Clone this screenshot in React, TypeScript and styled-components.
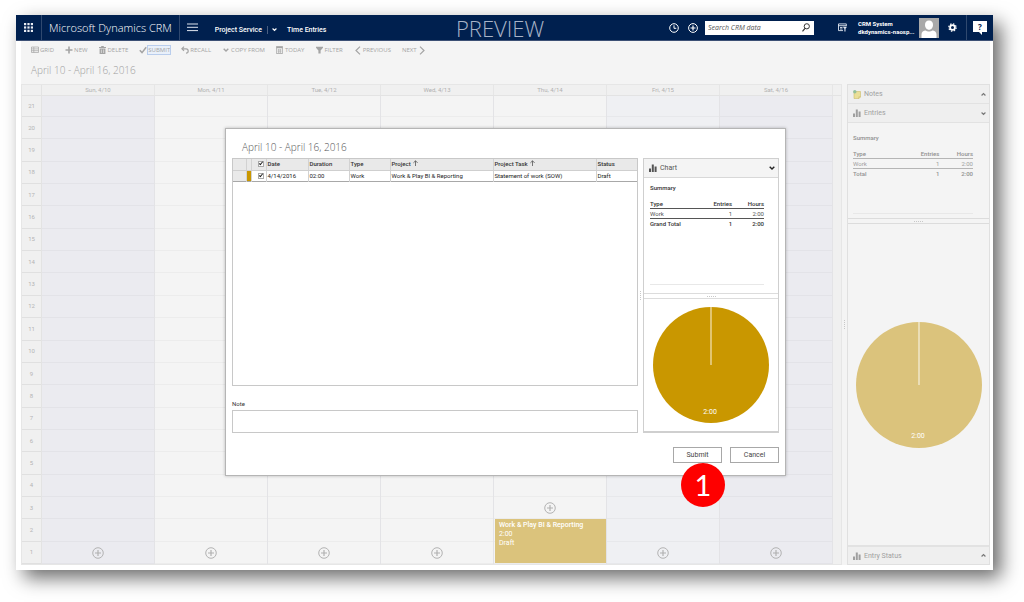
import React from "react";
import styled, { createGlobalStyle, css } from "styled-components";

const display = `"Open Sans", "Noto Sans", sans-serif`;

const GlobalStyle = createGlobalStyle`
  *, *::before, *::after { box-sizing: border-box; }
  body { margin: 0; background: #fff; color: #444; font: 6px/10px Roboto, "Open Sans", sans-serif; }
  button, input { font: inherit; color: inherit; margin: 0; padding: 0; }
  button { background: none; border: 0; cursor: pointer; }
  a { color: inherit; text-decoration: none; }
  svg { display: block; flex: none; }
`;

const Page = styled.div`
  display: flex;
  min-height: 100vh;
  padding: 15px 31px 32px 16px;
`;

const Window = styled.div`
  position: relative;
  flex: 1;
  min-width: 0;
  display: flex;
  flex-direction: column;
  background: #fff;
  box-shadow: 8px 8px 18px rgba(0, 0, 0, 0.58);
`;

/* Navigation bar */

const NavBar = styled.header`
  display: grid;
  grid-template-columns: 1fr auto 1fr;
  height: 26px;
  background: #00204f;
  color: #fff;
  border-bottom: 1px solid #3c5075;
`;

const NavGroup = styled.div<{ $end?: boolean }>`
  display: flex;
  align-items: center;
  justify-content: ${(p) => (p.$end ? "flex-end" : "flex-start")};
`;

const NavCell = styled.div<{ $pad: number; $divider?: boolean }>`
  display: flex;
  align-items: center;
  align-self: stretch;
  padding: 0 ${(p) => p.$pad}px;
  border-right: ${(p) => (p.$divider ? "1px solid #30496f" : "0")};
`;

const Brand = styled.a`
  font-family: ${display};
  font-size: 11px;
  font-weight: 300;
  line-height: 16px;
  white-space: nowrap;
`;

const Crumbs = styled.nav`
  display: flex;
  align-items: center;
  padding: 4px 0 0 10px;
  font-size: 7px;
  font-weight: 500;
  white-space: nowrap;
`;

const CrumbRule = styled.span`
  width: 1px;
  height: 8px;
  margin: 0 4px 0 5px;
  background: #4a5f82;
`;

const CrumbToggle = styled.button`
  margin-right: 10px;
`;

const Preview = styled.div`
  align-self: center;
  padding-right: 9px;
  color: #a9b4c8;
  font-family: ${display};
  font-size: 22px;
  font-weight: 300;
  line-height: 24px;
`;

const Search = styled.label`
  display: flex;
  align-items: center;
  width: 109px;
  height: 14px;
  margin: 0 24px 0 3px;
  padding: 0 4px 0 3px;
  background: #fff;
  color: #333;

  input {
    flex: 1;
    min-width: 0;
    border: 0;
    outline: 0;
    background: none;
    font-family: ${display};
    font-size: 7px;
    font-style: italic;
  }
  input::placeholder { color: #555; opacity: 1; }
`;

const Account = styled.div`
  width: 61px;
  margin-left: 11px;
  font-weight: 700;
  line-height: 8px;
  white-space: nowrap;
`;

/* Workspace behind the dialog */

const Workspace = styled.main`
  flex: 1;
  display: flex;
  flex-direction: column;
  margin: 0 3px 5px 5px;
  background: #f4f4f4;
  color: #b0b0b0;
`;

const CommandBar = styled.div`
  display: flex;
  align-items: center;
  gap: 11px;
  height: 18px;
  padding: 0 10px;
  color: #a4a4a4;
  font-family: ${display};
`;

const Command = styled.button<{ $focused?: boolean }>`
  display: flex;
  align-items: center;
  gap: 1px;
  white-space: nowrap;
  line-height: 8px;

  span {
    outline: ${(p) => (p.$focused ? "1px solid #b9cdec" : "0")};
    background: ${(p) => (p.$focused ? "#e9f0fa" : "none")};
  }
`;

const CommandIcon = styled.i`
  display: grid;
  place-items: center;
  width: 8px;
`;

const Heading = styled.h1<{ $dialog?: boolean }>`
  margin: 0;
  padding: ${(p) => (p.$dialog ? "10px 0 3px 10px" : "3px 10px 6px")};
  color: ${(p) => (p.$dialog ? "#555" : "#a0a0a0")};
  font-family: ${display};
  font-size: 10px;
  font-weight: 300;
  line-height: 16px;
`;

const Columns = styled.div`
  flex: 1;
  display: flex;
`;

const Calendar = styled.section`
  flex: 1;
  min-width: 0;
  display: flex;
  flex-direction: column;
  border: 1px solid #e6e6e6;
`;

const CalendarHead = styled.div`
  display: flex;
  height: 11px;
  background: #f0f0f0;
  border-bottom: 1px solid #e3e3e3;
`;

const DayName = styled.div`
  flex: 1;
  border-right: 1px solid #e6e6e6;
  text-align: center;
`;

const CalendarBody = styled.div`
  flex: 1;
  display: flex;
`;

const Corner = styled.div`
  flex: none;
  width: 20px;
  border-right: 1px solid #e3e3e3;
`;

const ScrollTrack = styled.div`
  flex: none;
  width: 8px;
  background: #f0f0f0;
`;

const slotRows = css`
  display: grid;
  grid-template-rows: 21px repeat(20, minmax(22px, 1fr));
`;

const HourColumn = styled.div`
  ${slotRows}
  flex: none;
  width: 20px;
  background: #f0f0f0;
  border-right: 1px solid #e3e3e3;
`;

const Hour = styled.div`
  display: flex;
  align-items: center;
  justify-content: center;
  border-bottom: 1px solid #e0e0e0;
  color: #b4b4b4;
`;

type Tone = "off" | "work" | "half";
const tones: Record<Tone, string> = { off: "#ebebf0", work: "#f4f4f4", half: "#eff0f3" };

const DayColumn = styled.div<{ $tone: Tone }>`
  ${slotRows}
  flex: 1;
  min-width: 0;
  background: ${(p) => tones[p.$tone]};
  border-right: 1px solid #e3e3e6;
`;

const Slot = styled.div<{ $row: number }>`
  grid-row: ${(p) => p.$row};
  grid-column: 1;
  border-bottom: 1px solid rgba(0, 0, 0, 0.03);
`;

const AddSlot = styled.button<{ $row: number }>`
  grid-row: ${(p) => p.$row};
  grid-column: 1;
  display: grid;
  place-items: center;
  color: #b0b0b0;
`;

const Entry = styled.article`
  grid-row: 20 / 22;
  grid-column: 1;
  margin: 0 0 1px 1px;
  padding: 2px 4px;
  background: #dbc37c;
  color: #fff;
  font-size: 7px;
  line-height: 9px;
  white-space: nowrap;

  strong { font-weight: 500; }
`;

const Grip = styled.div<{ $vertical?: boolean }>`
  flex: none;
  display: flex;
  flex-direction: ${(p) => (p.$vertical ? "column" : "row")};
  align-items: center;
  justify-content: center;
  gap: 1px;
  width: ${(p) => (p.$vertical ? "5px" : "auto")};
  height: ${(p) => (p.$vertical ? "auto" : "6px")};
  border: 0 solid #dcdcdc;
  border-width: ${(p) => (p.$vertical ? "0" : "1px 0")};

  i { width: 1px; height: 1px; background: #c8c8c8; }
`;

const SidePanel = styled.aside<{ $dialog?: boolean }>`
  flex: none;
  display: flex;
  flex-direction: column;
  width: ${(p) => (p.$dialog ? "136px" : "143px")};
  border: 1px solid ${(p) => (p.$dialog ? "#cfcfcf" : "#e0e0e0")};
  border-bottom-width: ${(p) => (p.$dialog ? "2px" : "1px")};
`;

const PanelHeader = styled.button<{ $dialog?: boolean; $last?: boolean }>`
  display: flex;
  align-items: center;
  gap: 3px;
  width: 100%;
  height: 19px;
  padding: 0 3px 0 5px;
  border: 0 solid ${(p) => (p.$dialog ? "#d8d8d8" : "#e2e2e2")};
  border-width: ${(p) => (p.$last ? "2px 0 0" : "0 0 1px")};
  background: ${(p) => (p.$dialog ? "#f4f4f4" : "#efefef")};
  color: ${(p) => (p.$dialog ? "#555" : "#a0a0a0")};
  font-size: 7px;
  text-align: left;

  span { flex: 1; }
`;

const SummaryBlock = styled.div<{ $dialog?: boolean }>`
  height: ${(p) => (p.$dialog ? "115px" : "95px")};
  padding: ${(p) => (p.$dialog ? "5px 14px 8px 6px" : "10px 16px 4px 5px")};
  display: flex;
  flex-direction: column;
  color: ${(p) => (p.$dialog ? "#333" : "#909090")};

  h2 { margin: 0 0 6px; font-size: 6px; font-weight: 500; line-height: 10px; }
  hr { width: 100%; margin: auto 0 0; border: 0; border-top: 1px solid #e8e8e8; }
`;

const SummaryTable = styled.table<{ $dialog?: boolean }>`
  width: 100%;
  border-collapse: collapse;
  line-height: 9px;

  th, td { padding: 0; text-align: right; font-weight: 400; }
  th:first-child { text-align: left; }
  tr { border-bottom: 1px solid ${(p) => (p.$dialog ? "#555" : "#b5b5b5")}; }
  tbody tr { color: ${(p) => (p.$dialog ? "#555" : "#a0a0a0")}; }
  tfoot tr { border-bottom: 0; }
  thead th, tfoot th, tfoot td { font-weight: 500; }
`;

const PieArea = styled.div`
  flex: 1;
  display: flex;
  align-items: center;
  justify-content: center;
`;

/* Submit dialog */

const Overlay = styled.div`
  position: absolute;
  inset: 0;
  display: flex;
  align-items: flex-start;
  justify-content: center;
  padding: 113px 0 0 2px;
`;

const Dialog = styled.form`
  width: 561px;
  max-width: 100%;
  padding: 0 6px;
  border: 1px solid #b5b5b5;
  background: #fff;
  box-shadow: 0 0 3px rgba(0, 0, 0, 0.25);
`;

const DialogBody = styled.div`
  display: flex;
  height: 275px;
`;

const DialogMain = styled.div`
  flex: 1;
  min-width: 0;
  display: flex;
  flex-direction: column;
`;

const GridBox = styled.div`
  flex: 1;
  border: 1px solid #c8c8c8;
`;

const EntryGrid = styled.table`
  width: 100%;
  table-layout: fixed;
  border-collapse: collapse;
  border-bottom: 1px solid #a8a8a8;
  line-height: 10px;
  color: #222;

  th, td {
    height: 11px;
    padding: 0 0 0 1px;
    border-right: 1px solid #d2d2d2;
    text-align: left;
    white-space: nowrap;
    overflow: hidden;
  }
  th { background: #e9e9e9; color: #333; font-weight: 500; border-bottom: 1px solid #cfcfcf; }
  td:first-child { background: #e9e9e9; }
  th:last-child, td:last-child { border-right: 0; }
  th svg { display: inline-block; margin-left: 2px; }
`;

const StatusCell = styled.td`
  background: #c99700;
`;

const Check = styled.input`
  appearance: none;
  display: block;
  width: 6px;
  height: 6px;
  margin: 0 2px 0 auto;
  border: 1px solid #aaa;
  background: #fff;

  &:checked::after {
    content: "";
    display: block;
    width: 2px;
    height: 4px;
    margin: -1px 0 0 1px;
    border: solid #222;
    border-width: 0 1px 1px 0;
    transform: rotate(40deg);
  }
`;

const NoteField = styled.label`
  display: block;
  padding-top: 13px;
  color: #333;

  input {
    display: block;
    width: 100%;
    height: 23px;
    margin-top: 1px;
    padding: 0 4px;
    border: 1px solid #c8c8c8;
    background: #fff;
  }
`;

const DialogActions = styled.div`
  display: flex;
  justify-content: flex-end;
  gap: 8px;
  padding: 14px 0 12px;
`;

const ActionWrap = styled.div`
  position: relative;
`;

const Action = styled.button`
  display: block;
  width: 49px;
  height: 16px;
  border: 1px solid #a8a8a8;
  background: #fff;
  color: #444;
  font-size: 7px;
`;

const StepBadge = styled.span`
  position: absolute;
  top: 16px;
  left: 8px;
  display: grid;
  place-items: center;
  width: 44px;
  height: 44px;
  border-radius: 50%;
  background: #fe0000;
  color: #fff;
  font: 29px/44px Lato, sans-serif;
`;

/* Icons */

const Stroke = ({ d, w = 1 }: { d: string; w?: number }) => (
  <svg width="8" height="8" viewBox="0 0 8 8" fill="none" stroke="currentColor" strokeWidth={w}>
    <path d={d} />
  </svg>
);

const Waffle = () => (
  <svg width="9" height="9" viewBox="0 0 9 9" fill="#e8ecf3">
    {[0, 3.4, 6.8].map((y) => [0, 3.4, 6.8].map((x) => <rect key={`${x}-${y}`} x={x} y={y} width="2.2" height="2.2" />))}
  </svg>
);

const Menu = () => (
  <svg width="11" height="9" viewBox="0 0 11 9" stroke="#dfe5ef">
    <path d="M0 1h11M0 4.3h11M0 7.6h11" />
  </svg>
);

const Chevron = ({ up, size = 5, color = "currentColor" }: { up?: boolean; size?: number; color?: string }) => (
  <svg width={size} height={size} viewBox="0 0 6 6" fill="none" stroke={color} strokeWidth="1.4">
    <path d={up ? "M.7 4.2 3 1.9l2.3 2.3" : "M.7 1.8 3 4.1l2.3-2.3"} />
  </svg>
);

const Bars = () => (
  <svg width="8" height="8" viewBox="0 0 8 8" fill="currentColor">
    <path d="M0 4.400h2V8H0zM2.800.5h2V8h-2zM5.600 2.600h2V8h-2z" />
  </svg>
);

const NoteIcon = () => (
  <svg width="8" height="9" viewBox="0 0 8 9">
    <path d="M1 1.500h6.500v5.500l-1.500 1.500H1z" fill="#eadf98" stroke="#cdbd6c" strokeWidth=".6" />
    <path d="M5.800 8.500V6.800h1.700" fill="none" stroke="#cdbd6c" strokeWidth=".6" />
    <circle cx="1.800" cy="1.800" r="1.700" fill="#93c09a" />
  </svg>
);

const GridIcon = () => <Stroke d="M.5 1h7v5.500h-7zM.5 2.900h7M.5 4.700h7M2.800 1v5.500" w={0.7} />;
const PlusIcon = () => <Stroke d="M4 .5v7M.5 4h7" w={1.6} />;
const TrashIcon = () => (
  <svg width="7" height="8" viewBox="0 0 7 8" fill="currentColor">
    <path d="M0 1h2.200V0h2.600v1H7v1H0z" />
    <path d="M.6 2.500h5.800V8H.6z" />
    <path d="M2.400 3.500v3.500M4.600 3.500v3.500" stroke="#f4f4f4" strokeWidth=".6" />
  </svg>
);
const CheckIcon = () => <Stroke d="M.8 4.300 3 6.600 7.200 1.200" w={1.5} />;
const UndoIcon = () => <Stroke d="M3 .7.9 2.800 3 4.900M1 2.800h4.200q2 0 2 2.200T5 7.200" w={1.2} />;
const CalendarIcon = () => (
  <svg width="7" height="8" viewBox="0 0 7 8" fill="none" stroke="currentColor">
    <path d="M.4.5h6.200v7H.4z" strokeWidth=".8" />
    <path d="M.4 1.500h6.200" strokeWidth="1.500" />
    <path d="M1.500 4h4M1.500 5.800h4M2.600 3v4M4.400 3v4" strokeWidth=".6" />
  </svg>
);
const FunnelIcon = () => (
  <svg width="7" height="8" viewBox="0 0 7 8" fill="currentColor">
    <path d="M0 .8h7v1L4.600 4.400V7.500H2.400V4.400L0 1.800z" />
  </svg>
);
const PrevIcon = () => (
  <svg width="6" height="9" viewBox="0 0 6 9" fill="none" stroke="currentColor" strokeWidth="1.200"><path d="M5 .6 1 4.500l4 3.900" /></svg>
);
const NextIcon = () => (
  <svg width="6" height="9" viewBox="0 0 6 9" fill="none" stroke="currentColor" strokeWidth="1.200"><path d="m1 .6 4 3.900-4 3.900" /></svg>
);
const ClockIcon = () => (
  <svg width="10" height="10" viewBox="0 0 10 10" fill="none" stroke="#fff"><circle cx="5" cy="5" r="4.300" /><path d="M5 2.300V5.300h2.300" /></svg>
);
const CirclePlus = ({ size = 10, w = 1 }: { size?: number; w?: number }) => (
  <svg width={size} height={size} viewBox="0 0 10 10" fill="none" stroke="currentColor" strokeWidth={w}>
    <circle cx="5" cy="5" r="4.400" /><path d="M5 2.500v5M2.500 5h5" strokeWidth={w * 1.2} />
  </svg>
);
const SearchIcon = () => (
  <svg width="8" height="9" viewBox="0 0 8 9" fill="none" stroke="#333"><circle cx="4.800" cy="3.300" r="2.600" /><path d="M3 5.300.5 8.300" strokeWidth="1.200" /></svg>
);
const AdvancedFind = () => (
  <svg width="9" height="9" viewBox="0 0 9 9" fill="none" stroke="#dfe5ef" strokeWidth=".9">
    <path d="M8.300 3V.9H.5v6.700H5M.5 2.700h7.800M2 4.500h2.500M2 6h2.500" />
    <path d="M4.800 3.800H9L7.500 5.800V8.500H6.400V5.800z" fill="#dfe5ef" stroke="none" />
  </svg>
);
const Avatar = () => (
  <svg width="20" height="20" viewBox="0 0 20 20">
    <rect width="20" height="20" fill="#a9a9a9" />
    <path d="M10 2.500c2.600 0 4 1.800 4 4.200 0 2.700-1.600 5-4 5s-4-2.300-4-5c0-2.400 1.400-4.200 4-4.200z" fill="#fff" />
    <path d="M2.500 20v-3.500c0-2.500 2-4 4.200-4 1.600 1.300 5 1.300 6.600 0 2.200 0 4.200 1.500 4.200 4V20z" fill="#fff" />
  </svg>
);
const Gear = () => (
  <svg width="9" height="9" viewBox="0 0 9 9" fill="none" stroke="#fff">
    <circle cx="4.500" cy="4.500" r="2.400" strokeWidth="1.800" />
    <circle cx="4.500" cy="4.500" r="3.700" strokeWidth="1.200" strokeDasharray="1.450 1.456" />
  </svg>
);

const HelpBubble = styled.button`
  position: relative;
  width: 14px;
  height: 11px;
  margin-bottom: 2px;
  background: #fff;
  color: #00204f;
  font-family: ${display};
  font-size: 8px;
  font-weight: 700;
  line-height: 11px;

  &::after {
    content: "";
    position: absolute;
    top: 11px;
    left: 6px;
    border: solid transparent;
    border-width: 0 3px 3px 0;
    border-right-color: #fff;
  }
`;

const Pie = ({ size, color, line, label }: { size: number; color: string; line: string; label: string }) => (
  <svg width={size} height={size} viewBox="0 0 126 126" role="img" aria-label={`${label} hours`}>
    <circle cx="63" cy="63" r="63" fill={color} />
    <path d="M63 0v63" stroke={line} strokeWidth="1.400" />
    <text x="62" y="116" textAnchor="middle" fill="#fff" fontSize={(7 * 126) / size}>{label}</text>
  </svg>
);

const Dots = ({ vertical }: { vertical?: boolean }) => (
  <Grip $vertical={vertical}>{[0, 1, 2, 3, 4].map((n) => <i key={n} />)}</Grip>
);

const Summary = ({ dialog, total }: { dialog?: boolean; total: string }) => (
  <SummaryBlock $dialog={dialog}>
    <h2>Summary</h2>
    <SummaryTable $dialog={dialog}>
      <colgroup><col /><col style={{ width: "30%" }} /><col style={{ width: "28%" }} /></colgroup>
      <thead><tr><th scope="col">Type</th><th scope="col">Entries</th><th scope="col">Hours</th></tr></thead>
      <tbody><tr><th scope="row">Work</th><td>1</td><td>2:00</td></tr></tbody>
      <tfoot><tr><th scope="row">{total}</th><td>1</td><td>2:00</td></tr></tfoot>
    </SummaryTable>
    <hr />
  </SummaryBlock>
);

const commands = [
  { label: "GRID", icon: <GridIcon /> },
  { label: "NEW", icon: <PlusIcon /> },
  { label: "DELETE", icon: <TrashIcon /> },
  { label: "SUBMIT", icon: <CheckIcon />, focused: true },
  { label: "RECALL", icon: <UndoIcon /> },
  { label: "COPY FROM", icon: <Chevron size={6} /> },
  { label: "TODAY", icon: <CalendarIcon /> },
  { label: "FILTER", icon: <FunnelIcon /> },
  { label: "PREVIOUS", icon: <PrevIcon /> },
];

const days: { name: string; tone: Tone; addRow: number; entry?: boolean }[] = [
  { name: "Sun, 4/10", tone: "off", addRow: 21 },
  { name: "Mon, 4/11", tone: "work", addRow: 21 },
  { name: "Tue, 4/12", tone: "work", addRow: 21 },
  { name: "Wed, 4/13", tone: "work", addRow: 21 },
  { name: "Thu, 4/14", tone: "work", addRow: 19, entry: true },
  { name: "Fri, 4/15", tone: "half", addRow: 21 },
  { name: "Sat, 4/16", tone: "off", addRow: 21 },
];

const hours = Array.from({ length: 21 }, (_, i) => 21 - i);

const SortUp = () => (
  <svg width="5" height="6" viewBox="0 0 5 6" fill="none" stroke="#555" strokeWidth=".8"><path d="M2.500 6V.8M.4 2.900 2.500.8l2.100 2.100" /></svg>
);

export default function App() {
  return (
    <>
      <GlobalStyle />
      <Page>
        <Window>
          <NavBar>
            <NavGroup>
              <NavCell as="button" aria-label="Apps" $pad={8} $divider><Waffle /></NavCell>
              <NavCell $pad={7} $divider><Brand href="#">Microsoft Dynamics CRM</Brand></NavCell>
              <NavCell as="button" aria-label="Menu" $pad={7}><Menu /></NavCell>
              <Crumbs>
                <a href="#">Project Service</a>
                <CrumbRule />
                <CrumbToggle aria-label="Switch area"><Chevron /></CrumbToggle>
                <a href="#">Time Entries</a>
              </Crumbs>
            </NavGroup>
            <Preview>PREVIEW</Preview>
            <NavGroup $end>
              <NavCell as="button" aria-label="Recent" $pad={5}><ClockIcon /></NavCell>
              <NavCell as="button" aria-label="Create" $pad={4}><CirclePlus /></NavCell>
              <Search>
                <input type="search" placeholder="Search CRM data" aria-label="Search CRM data" />
                <SearchIcon />
              </Search>
              <button aria-label="Advanced find"><AdvancedFind /></button>
              <Account>CRM System<br />dkdynamics-naosp...</Account>
              <Avatar />
              <NavCell as="button" aria-label="Settings" $pad={9} $divider><Gear /></NavCell>
              <NavCell $pad={6}><HelpBubble aria-label="Help">?</HelpBubble></NavCell>
            </NavGroup>
          </NavBar>

          <Workspace>
            <CommandBar>
              {commands.map((c) => (
                <Command key={c.label} $focused={c.focused}><CommandIcon>{c.icon}</CommandIcon><span>{c.label}</span></Command>
              ))}
              <Command><span>NEXT</span><CommandIcon><NextIcon /></CommandIcon></Command>
            </CommandBar>
            <Heading>April 10 - April 16, 2016</Heading>
            <Columns>
              <Calendar>
                <CalendarHead>
                  <Corner />
                  {days.map((d) => <DayName key={d.name}>{d.name}</DayName>)}
                  <ScrollTrack />
                </CalendarHead>
                <CalendarBody>
                  <HourColumn>{hours.map((h) => <Hour key={h}>{h}</Hour>)}</HourColumn>
                  {days.map((d) => (
                    <DayColumn key={d.name} $tone={d.tone}>
                      {hours.map((h, i) => <Slot key={h} $row={i + 1} />)}
                      <AddSlot $row={d.addRow} aria-label={`Add entry on ${d.name}`}><CirclePlus size={12} w={0.8} /></AddSlot>
                      {d.entry && <Entry><strong>Work &amp; Play BI &amp; Reporting</strong><br />2:00<br />Draft</Entry>}
                    </DayColumn>
                  ))}
                  <ScrollTrack />
                </CalendarBody>
              </Calendar>
              <Dots vertical />
              <SidePanel>
                <PanelHeader><NoteIcon /><span>Notes</span><Chevron up color="#777" /></PanelHeader>
                <PanelHeader><Bars /><span>Entries</span><Chevron color="#777" /></PanelHeader>
                <Summary total="Total" />
                <Dots />
                <PieArea><Pie size={126} color="#dbc37c" line="#f3ead0" label="2:00" /></PieArea>
                <PanelHeader $last><Bars /><span>Entry Status</span><Chevron up color="#777" /></PanelHeader>
              </SidePanel>
            </Columns>
          </Workspace>

          <Overlay>
            <Dialog role="dialog" aria-label="Submit time entries" onSubmit={(e) => e.preventDefault()}>
              <Heading as="h2" $dialog>April 10 - April 16, 2016</Heading>
              <DialogBody>
                <DialogMain>
                  <GridBox>
                    <EntryGrid>
                      <colgroup>
                        {[13, 5, 15, 42, 41, 41, 103, 103].map((w, i) => <col key={i} style={{ width: w }} />)}
                        <col />
                      </colgroup>
                      <thead>
                        <tr>
                          <th /><th />
                          <th><Check type="checkbox" defaultChecked aria-label="Select all" /></th>
                          <th>Date</th><th>Duration</th><th>Type</th>
                          <th>Project<SortUp /></th><th>Project Task<SortUp /></th><th>Status</th>
                        </tr>
                      </thead>
                      <tbody>
                        <tr>
                          <td /><StatusCell />
                          <td><Check type="checkbox" defaultChecked aria-label="Select entry" /></td>
                          <td>4/14/2016</td><td>02:00</td><td>Work</td>
                          <td>Work &amp; Play BI &amp; Reporting</td><td>Statement of work (SOW)</td><td>Draft</td>
                        </tr>
                      </tbody>
                    </EntryGrid>
                  </GridBox>
                  <NoteField>Note<input type="text" /></NoteField>
                </DialogMain>
                <Dots vertical />
                <SidePanel $dialog>
                  <PanelHeader type="button" $dialog><Bars /><span>Chart</span><Chevron size={6} color="#222" /></PanelHeader>
                  <Summary dialog total="Grand Total" />
                  <Dots />
                  <PieArea><Pie size={116} color="#c99700" line="#f0dfae" label="2:00" /></PieArea>
                </SidePanel>
              </DialogBody>
              <DialogActions>
                <ActionWrap>
                  <Action type="submit">Submit</Action>
                  <StepBadge>1</StepBadge>
                </ActionWrap>
                <Action type="button">Cancel</Action>
              </DialogActions>
            </Dialog>
          </Overlay>
        </Window>
      </Page>
    </>
  );
}
